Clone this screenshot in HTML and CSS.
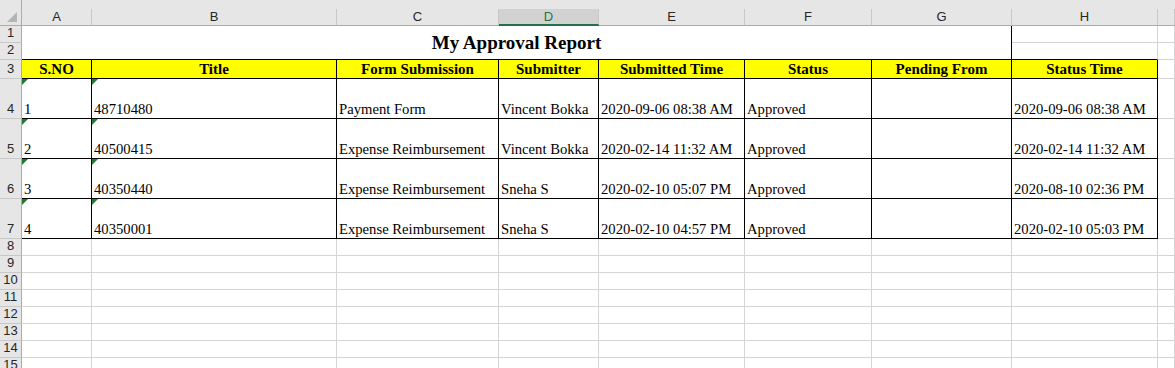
FILE: index.html
```html
<!DOCTYPE html>
<html lang="en">
<head>
  <meta charset="UTF-8">
  <title>My Approval Report</title>
  <link rel="stylesheet" href="styles.css">
</head>
<body>
  <div class="sheet">
    <!-- column letters -->
    <div class="corner"><svg width="21" height="25"><polygon points="17,12 17,22 7,22" fill="#b4b4b4"/></svg></div>
    <div class="col-head"><span>A</span></div>
    <div class="col-head"><span>B</span></div>
    <div class="col-head"><span>C</span></div>
    <div class="col-head sel"><span>D</span></div>
    <div class="col-head"><span>E</span></div>
    <div class="col-head"><span>F</span></div>
    <div class="col-head"><span>G</span></div>
    <div class="col-head"><span>H</span></div>
    <div class="col-head"><span></span></div>

    <!-- rows 1-2: merged title -->
    <div class="row-head">1</div>
    <div class="cell title">My Approval Report</div>
    <div class="cell"></div>
    <div class="cell"></div>
    <div class="row-head">2</div>
    <div class="cell top-of-head"></div>
    <div class="cell"></div>

    <!-- row 3: headings -->
    <div class="row-head">3</div>
    <div class="cell bd head">S.NO</div>
    <div class="cell bd head">Title</div>
    <div class="cell bd head">Form Submission</div>
    <div class="cell bd head">Submitter</div>
    <div class="cell bd head">Submitted Time</div>
    <div class="cell bd head">Status</div>
    <div class="cell bd head">Pending From</div>
    <div class="cell bd head">Status Time</div>
    <div class="cell"></div>

    <div class="row-head">4</div>
    <div class="cell bd txt">1</div>
    <div class="cell bd txt">48710480</div>
    <div class="cell bd">Payment Form</div>
    <div class="cell bd">Vincent Bokka</div>
    <div class="cell bd">2020-09-06 08:38 AM</div>
    <div class="cell bd">Approved</div>
    <div class="cell bd"></div>
    <div class="cell bd">2020-09-06 08:38 AM</div>
    <div class="cell"></div>

    <div class="row-head">5</div>
    <div class="cell bd txt">2</div>
    <div class="cell bd txt">40500415</div>
    <div class="cell bd">Expense Reimbursement</div>
    <div class="cell bd">Vincent Bokka</div>
    <div class="cell bd">2020-02-14 11:32 AM</div>
    <div class="cell bd">Approved</div>
    <div class="cell bd"></div>
    <div class="cell bd">2020-02-14 11:32 AM</div>
    <div class="cell"></div>

    <div class="row-head">6</div>
    <div class="cell bd txt">3</div>
    <div class="cell bd txt">40350440</div>
    <div class="cell bd">Expense Reimbursement</div>
    <div class="cell bd">Sneha S</div>
    <div class="cell bd">2020-02-10 05:07 PM</div>
    <div class="cell bd">Approved</div>
    <div class="cell bd"></div>
    <div class="cell bd">2020-08-10 02:36 PM</div>
    <div class="cell"></div>

    <div class="row-head">7</div>
    <div class="cell bd txt">4</div>
    <div class="cell bd txt">40350001</div>
    <div class="cell bd">Expense Reimbursement</div>
    <div class="cell bd">Sneha S</div>
    <div class="cell bd">2020-02-10 04:57 PM</div>
    <div class="cell bd">Approved</div>
    <div class="cell bd"></div>
    <div class="cell bd">2020-02-10 05:03 PM</div>
    <div class="cell"></div>

    <!-- empty rows -->
    <div class="row-head">8</div>
    <div class="cell"></div><div class="cell"></div><div class="cell"></div><div class="cell"></div><div class="cell"></div><div class="cell"></div><div class="cell"></div><div class="cell"></div><div class="cell"></div>
    <div class="row-head">9</div>
    <div class="cell"></div><div class="cell"></div><div class="cell"></div><div class="cell"></div><div class="cell"></div><div class="cell"></div><div class="cell"></div><div class="cell"></div><div class="cell"></div>
    <div class="row-head">10</div>
    <div class="cell"></div><div class="cell"></div><div class="cell"></div><div class="cell"></div><div class="cell"></div><div class="cell"></div><div class="cell"></div><div class="cell"></div><div class="cell"></div>
    <div class="row-head">11</div>
    <div class="cell"></div><div class="cell"></div><div class="cell"></div><div class="cell"></div><div class="cell"></div><div class="cell"></div><div class="cell"></div><div class="cell"></div><div class="cell"></div>
    <div class="row-head">12</div>
    <div class="cell"></div><div class="cell"></div><div class="cell"></div><div class="cell"></div><div class="cell"></div><div class="cell"></div><div class="cell"></div><div class="cell"></div><div class="cell"></div>
    <div class="row-head">13</div>
    <div class="cell"></div><div class="cell"></div><div class="cell"></div><div class="cell"></div><div class="cell"></div><div class="cell"></div><div class="cell"></div><div class="cell"></div><div class="cell"></div>
    <div class="row-head">14</div>
    <div class="cell"></div><div class="cell"></div><div class="cell"></div><div class="cell"></div><div class="cell"></div><div class="cell"></div><div class="cell"></div><div class="cell"></div><div class="cell"></div>
    <div class="row-head">15</div>
    <div class="cell"></div><div class="cell"></div><div class="cell"></div><div class="cell"></div><div class="cell"></div><div class="cell"></div><div class="cell"></div><div class="cell"></div><div class="cell"></div>
  </div>
</body>
</html>
```

FILE: styles.css
```css
* { box-sizing: border-box; }

body {
  margin: 0;
  background: #fff;
  overflow: hidden;
}

.sheet {
  display: grid;
  grid-template-columns: 22px 70px 245px 162px 100px 146px 127px 140px 146px 1fr;
  grid-template-rows: 26px 17px 17px 19px 40px 40px 40px 40px repeat(8, 17px);
  height: 368px;
  overflow: hidden;
}

.corner {
  background: #e6e6e6;
  border-right: 1px solid #ababab;
  border-bottom: 1px solid #ababab;
}
.corner svg { display: block; }

.col-head {
  background: #e6e6e6;
  border-bottom: 1px solid #ababab;
  display: flex;
  align-items: flex-end;
  font-family: "Liberation Sans", Arial, sans-serif;
  font-size: 13px;
  color: #262626;
}
.col-head span {
  flex: 1;
  height: 16px;
  line-height: 16px;
  text-align: center;
  border-right: 1px solid #c8c8c8;
}
.col-head.sel { border-bottom-color: #217346; }
.col-head.sel span {
  background: #d2d2d2;
  color: #217346;
  border-bottom: 1px solid #217346;
  line-height: 15px;
}

.row-head {
  background: #e6e6e6;
  border-right: 1px solid #ababab;
  border-bottom: 1px solid #c8c8c8;
  display: flex;
  align-items: flex-end;
  justify-content: center;
  padding-bottom: 2px;
  font-family: "Liberation Sans", Arial, sans-serif;
  font-size: 13px;
  line-height: 15px;
  color: #262626;
}

.cell {
  position: relative;
  display: flex;
  align-items: flex-end;
  padding: 0 2px;
  border-right: 1px solid #d4d4d4;
  border-bottom: 1px solid #d4d4d4;
  font-family: "Liberation Serif", "Times New Roman", serif;
  font-size: 14.67px;
  line-height: 17px;
  color: #000;
  white-space: nowrap;
  overflow: hidden;
}

.title {
  grid-column: 2 / 9;
  grid-row: 2 / 4;
  align-items: center;
  justify-content: center;
  font-weight: bold;
  font-size: 19px;
  line-height: 21px;
  border-right-color: #000;
  border-bottom-color: #000;
}

.top-of-head { border-bottom-color: #000; }

.bd {
  border-right-color: #000;
  border-bottom-color: #000;
}

.head {
  background: #ffff00;
  justify-content: center;
  font-weight: bold;
  font-size: 15px;
}

/* number stored as text marker */
.txt::before {
  content: "";
  position: absolute;
  top: 0;
  left: 0;
  border-top: 6px solid #1f7a32;
  border-right: 6px solid transparent;
}
```
